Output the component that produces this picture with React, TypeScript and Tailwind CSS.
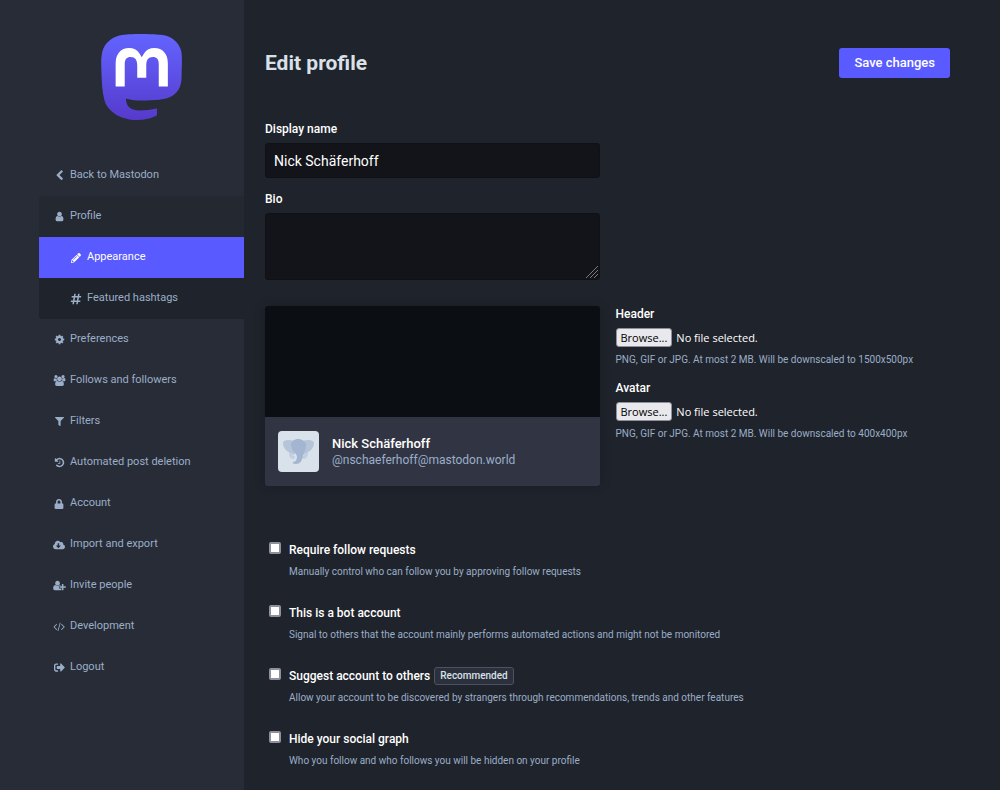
import React from 'react';
import {
    FaCloudDownloadAlt,
    FaFilter,
    FaHashtag,
    FaLock,
    FaPencilAlt,
    FaSignOutAlt
} from 'react-icons/fa';

interface NavItemProps {
    icon: React.ReactNode;
    label: string;
    className?: string;
}

interface FileFieldProps {
    id: string;
    label: string;
    hint: string;
}

interface CheckFieldProps {
    id: string;
    label: string;
    hint: string;
    badge?: string;
}

interface GlyphProps {
    d: string;
    wide?: boolean;
}

const glyphs = {
    back: 'M1427 301l-531 531 531 531q19 19 19 45t-19 45l-166 166q-19 19-45 19t-45-19l-742-742q-19-19-19-45t19-45l742-742q19-19 45-19t45 19l166 166q19 19 19 45t-19 45z',
    user: 'M1536 1399q0 109-62.5 187t-150.5 78h-854q-88 0-150.5-78t-62.5-187q0-85 8.5-160.5t31.5-152 58.5-131 94-89 134.5-34.5q131 128 313 128t313-128q76 0 134.5 34.5t94 89 58.5 131 31.5 152 8.5 160.5zm-256-887q0 159-112.5 271.5t-271.5 112.5-271.5-112.5-112.5-271.5 112.5-271.5 271.5-112.5 271.5 112.5 112.5 271.5z',
    cog: 'M1152 896q0-106-75-181t-181-75-181 75-75 181 75 181 181 75 181-75 75-181zm512-109v222q0 12-8 23t-20 13l-185 28q-19 54-39 91 35 50 107 138 10 12 10 25t-9 23q-27 37-99 108t-94 71q-12 0-26-9l-138-108q-44 23-91 38-16 136-29 186-7 28-36 28h-222q-14 0-24.5-8.5t-11.5-21.5l-28-184q-49-16-90-37l-141 107q-10 9-25 9-14 0-25-11-126-114-165-168-7-10-7-23 0-12 8-23 15-21 51-66.5t54-70.5q-27-50-41-99l-183-27q-13-2-21-12.5t-8-23.5v-222q0-12 8-23t19-13l186-28q14-46 39-92-40-57-107-138-10-12-10-24 0-10 9-23 26-36 98.5-107.5t94.5-71.5q13 0 26 10l138 107q44-23 91-38 16-136 29-186 7-28 36-28h222q14 0 24.5 8.5t11.5 21.5l28 184q49 16 90 37l142-107q9-9 24-9 13 0 25 10 129 119 165 170 7 8 7 22 0 12-8 23-15 21-51 66.5t-54 70.5q26 50 41 98l183 28q13 2 21 12.5t8 23.5z',
    users: 'M657 896q-162 5-265 128h-134q-82 0-138-40.5t-56-118.5q0-353 124-353 6 0 43.5 21t97.5 42.5 119 21.5q67 0 133-23-5 37-5 66 0 159 90 293zm1071 637q0 120-73 189.5t-194 69.5h-874q-121 0-194-69.5t-73-189.5q0-53 3.5-103.5t14-109 26.5-108.5 43-97.5 62-81 85.5-53.5 111.5-20q10 0 43 21.5t73 48 107 48 135 21.5 135-21.5 107-48 73-48 43-21.5q61 0 111.5 20t85.5 53.5 62 81 43 97.5 26.5 108.5 14 109 3.5 103.5zm-1024-1277q0 106-75 181t-181 75-181-75-75-181 75-181 181-75 181 75 75 181zm704 384q0 159-112.5 271.5t-271.5 112.5-271.5-112.5-112.5-271.5 112.5-271.5 271.5-112.5 271.5 112.5 112.5 271.5zm576 225q0 78-56 118.5t-138 40.5h-134q-103-123-265-128 90-134 90-293 0-29-5-66 66 23 133 23 59 0 119-21.5t97.5-42.5 43.5-21q124 0 124 353zm-128-609q0 106-75 181t-181 75-181-75-75-181 75-181 181-75 181 75 75 181z',
    history: 'M1664 896q0 156-61 298t-164 245-245 164-298 61q-172 0-327-72.5t-264-204.5q-7-10-6.5-22.5t8.5-20.5l137-138q10-9 25-9 16 2 23 12 73 95 179 147t225 52q104 0 198.5-40.5t163.5-109.5 109.5-163.5 40.5-198.5-40.5-198.5-109.5-163.5-163.5-109.5-198.5-40.5q-98 0-188 35.5t-160 101.5l137 138q31 30 14 69-17 40-59 40h-448q-26 0-45-19t-19-45v-448q0-42 40-59 39-17 69 14l130 129q107-101 244.5-156.5t284.5-55.5q156 0 298 61t245 164 164 245 61 298zm-640-288v448q0 14-9 23t-23 9h-320q-14 0-23-9t-9-23v-64q0-14 9-23t23-9h224v-352q0-14 9-23t23-9h64q14 0 23 9t9 23z',
    userPlus: 'M704 896c212 0 384-172 384-384s-172-384-384-384-384 172-384 384 172 384 384 384zm960 128h352q13 0 22.5 9.5t9.5 22.5v192q0 13-9.5 22.5t-22.5 9.5h-352v352q0 13-9.5 22.5t-22.5 9.5h-192q-13 0-22.5-9.5t-9.5-22.5v-352h-352q-13 0-22.5-9.5t-9.5-22.5v-192q0-13 9.5-22.5t22.5-9.5h352v-352q0-13 9.5-22.5t22.5-9.5h192q13 0 22.5 9.5t9.5 22.5v352zm-736 224q0 52 38 90t90 38h256v238q-68 50-171 50h-874q-121 0-194-69t-73-190q0-53 3.5-103.5t14-109 26.5-108.5 43-97.5 62-81 85.5-53.5 111.5-20q19 0 39 17 79 61 154.500 91.500t164.500 30.500 164.500-30.500 154.500-91.500q20-17 39-17 132 0 217 96h-223q-52 0-90 38t-38 90v192z',
    code: 'M617 1399l-50 50q-10 10-23 10t-23-10l-466-466q-10-10-10-23t10-23l466-466q10-10 23-10t23 10l50 50q10 10 10 23t-10 23l-393 393 393 393q10 10 10 23t-10 23zm591-1067l-373 1291q-4 13-15.5 19.5t-23.5 2.5l-62-17q-13-4-19.5-15.5t-2.5-24.5l373-1291q4-13 15.5-19.5t23.5-2.5l62 17q13 4 19.5 15.5t2.5 24.5zm657 651l-466 466q-10 10-23 10t-23-10l-50-50q-10-10-10-23t10-23l393-393-393-393q-10-10-10-23t10-23l50-50q10-10 23-10t23 10l466 466q10 10 10 23t-10 23z'
};

const Glyph: React.FC<GlyphProps> = ({ d, wide }) => (
    <svg
        viewBox={wide ? '0 0 2048 1792' : '0 0 1792 1792'}
        className={wide ? 'h-[11px] w-[13px] shrink-0' : 'size-[11px] shrink-0'}
        fill="currentColor"
        aria-hidden="true"
    >
        <path d={d} />
    </svg>
);

const MastodonLogo: React.FC = () => (
    <svg viewBox="0 0 75 79" className="h-[86px] w-[82px]" role="img" aria-label="Mastodon">
        <defs>
            <linearGradient id="logo-fill" x1="0" y1="0" x2="0" y2="1">
                <stop stopColor="#6364ff" />
                <stop offset="1" stopColor="#563acc" />
            </linearGradient>
        </defs>
        <path fill="url(#logo-fill)" d="M73.8393 17.4898C72.6973 9.00165 65.2994 2.31235 56.5296 1.01614C55.05 0.797115 49.4441 0 36.4582 0H36.3612C23.3717 0 20.585 0.797115 19.1054 1.01614C10.5798 2.27644 2.79399 8.28712 0.904997 16.8758C-0.00358524 21.1056 -0.100549 25.7949 0.0682394 30.0965C0.308852 36.2651 0.355538 42.423 0.91577 48.5665C1.30307 52.6474 1.97872 56.6957 2.93763 60.6812C4.73325 68.042 12.0019 74.1676 19.1233 76.6666C26.7478 79.2728 34.9474 79.7055 42.8039 77.9162C43.6682 77.7151 44.5217 77.4817 45.3645 77.216C47.275 76.6092 49.5123 75.9305 51.1571 74.7385L51.2325 74.5948V68.6416L51.0171 68.4729C45.9835 69.675 40.8254 70.2777 35.6502 70.2682C26.7439 70.2682 24.3486 66.042 23.6626 64.2826C23.1113 62.762 22.7612 61.1759 22.6212 59.5646L22.8367 59.3886C27.7864 60.5826 32.8604 61.1853 37.9522 61.1839C39.1768 61.1839 40.3978 61.1839 41.6224 61.1516C46.7435 61.008 52.1411 60.7459 57.1796 59.7621C57.3053 59.7369 57.431 59.7154 57.5387 59.6831C65.4861 58.157 73.0493 53.3672 73.8178 41.2381C73.8465 40.7606 73.9184 36.2364 73.9184 35.7409C73.9219 34.0569 74.4606 23.7949 73.8393 17.4898Z" />
        <path fill="#fff" d="M61.2484 27.0263V48.114H52.8916V27.6475C52.8916 23.3388 51.096 21.1413 47.4437 21.1413C43.4287 21.1413 41.4177 23.7409 41.4177 28.8755V40.0782H33.1111V28.8755C33.1111 23.7409 31.0965 21.1413 27.0815 21.1413C23.4507 21.1413 21.6371 23.3388 21.6335 27.6475V48.114H13.2857V27.0263C13.2857 22.7176 14.384 19.2946 16.5843 16.7572C18.8539 14.2258 21.8311 12.926 25.5264 12.926C29.8036 12.926 33.0357 14.5705 35.1905 17.8559L37.2698 21.346L39.3527 17.8559C41.5074 14.5705 44.7395 12.926 49.0095 12.926C52.7013 12.926 55.6784 14.2258 57.9553 16.7572C60.1531 19.2922 61.2508 22.7152 61.2484 27.0263Z" />
    </svg>
);

const ElephantAvatar: React.FC = () => (
    <svg viewBox="0 0 41 41" className="size-[41px] shrink-0 rounded" role="img" aria-label="Avatar">
        <rect width="41" height="41" fill="#d9e1ea" />
        <path fill="#b6c4da" d="M5 12c0-3 6-4 11-2l1 13c-2 1-5 0-6-2-3-1-6-5-6-9zM36 12c0-3-6-4-11-2l-1 13c2 1 5 0 6-2 3-1 6-5 6-9z" />
        <path fill="#c3cfe0" d="M11 22c0 4 2 6 5 6l1-3c-2 0-3-1-3-3zM30 22c0 4-2 6-5 6l-1-3c2 0 3-1 3-3z" />
        <path fill="#a4b5d1" d="M13 14c0-4 4-6 7-6s8 2 8 6c0 5-2 7-3 11-1 5-3 8-7 8-2 0-4-1-3-2 2 0 4-2 4-5 0-4-6-6-6-12z" />
    </svg>
);

const NavItem: React.FC<NavItemProps> = ({ icon, label, className = 'pl-[13px] text-[#9baec8]' }) => (
    <li>
        <a href="#" className={`flex h-[41px] items-center gap-1 ${className}`}>
            <span className="flex w-[14px] justify-center">{icon}</span>
            {label}
        </a>
    </li>
);

const FileField: React.FC<FileFieldProps> = ({ id, label, hint }) => (
    <div>
        <label htmlFor={id} className="block text-[12px] leading-4 font-medium text-white">{label}</label>
        <div className="mt-1.5 flex items-center gap-1 font-['Open_Sans',sans-serif] text-[11px]">
            <input id={id} type="file" className="sr-only" />
            <label htmlFor={id} className="h-[19px] rounded-[3px] border border-[#8f8f9d] bg-[#e9e9ed] px-1 leading-[17px] text-black">
                Browse...
            </label>
            <span className="leading-[19px] text-white">No file selected.</span>
        </div>
        <p className="mt-[5px] text-[10px] leading-4 text-[#9baec8]">{hint}</p>
    </div>
);

const CheckField: React.FC<CheckFieldProps> = ({ id, label, hint, badge }) => (
    <div className="flex gap-2 pl-1">
        <input
            id={id}
            type="checkbox"
            className="mt-0.5 size-3 shrink-0 appearance-none rounded-[2px] border-2 border-[#8f8f9d] bg-white checked:bg-[#595aff]"
        />
        <div>
            <div className="flex h-5 items-center gap-1">
                <label htmlFor={id} className="text-[12px] font-medium text-white">{label}</label>
                {badge && (
                    <span className="rounded-[3px] border border-[#4d5262] bg-[#2c303c] px-[5px] text-[10px] leading-4 font-medium text-[#d9e1e8]">
                        {badge}
                    </span>
                )}
            </div>
            <p className="mt-1 text-[10px] leading-4 text-[#9baec8]">{hint}</p>
        </div>
    </div>
);

const App: React.FC = () => {
    return (
        <div className="flex min-h-screen bg-[#1f232b] font-[Roboto,sans-serif]">
            <aside className="w-61 shrink-0 bg-[#282c37] pl-[39px]">
                <a href="#" className="flex justify-center pt-[34px]">
                    <MastodonLogo />
                </a>
                <nav className="mt-[35px] text-[11px]">
                    <ul>
                        <NavItem icon={<Glyph d={glyphs.back} />} label="Back to Mastodon" />
                        <NavItem icon={<Glyph d={glyphs.user} />} label="Profile" className="rounded-tl bg-[#242831] pl-[13px] text-[#9baec8]" />
                        <NavItem icon={<FaPencilAlt size={10} />} label="Appearance" className="bg-[#595aff] pl-[30px] text-white" />
                        <NavItem icon={<FaHashtag size={12} />} label="Featured hashtags" className="rounded-bl bg-[#1f232b] pl-[30px] text-[#9baec8]" />
                        <NavItem icon={<Glyph d={glyphs.cog} />} label="Preferences" />
                        <NavItem icon={<Glyph d={glyphs.users} wide />} label="Follows and followers" />
                        <NavItem icon={<FaFilter size={9} />} label="Filters" />
                        <NavItem icon={<Glyph d={glyphs.history} />} label="Automated post deletion" />
                        <NavItem icon={<FaLock size={10} />} label="Account" />
                        <NavItem icon={<FaCloudDownloadAlt size={12} />} label="Import and export" />
                        <NavItem icon={<Glyph d={glyphs.userPlus} wide />} label="Invite people" />
                        <NavItem icon={<Glyph d={glyphs.code} wide />} label="Development" />
                        <NavItem icon={<FaSignOutAlt size={11} />} label="Logout" />
                    </ul>
                </nav>
            </aside>

            <main className="min-w-0 flex-1 pt-12 pr-[50px] pl-[21px]">
                <form>
                    <div className="flex items-center justify-between">
                        <h1 className="text-[21px] leading-[30px] font-bold text-[#d9e1e8]">Edit profile</h1>
                        <button type="button" className="rounded-[3px] bg-[#595aff] px-[15px] text-[13px] leading-[30px] font-medium text-white">
                            Save changes
                        </button>
                    </div>

                    <div className="mt-[43px] grid grid-cols-2 gap-4">
                        <div className="flex flex-col">
                            <label htmlFor="display-name" className="text-[12px] leading-4 font-medium text-white">Display name</label>
                            <input
                                id="display-name"
                                type="text"
                                defaultValue="Nick Schäferhoff"
                                className="mt-1.5 h-[35px] rounded-[3px] border border-[#101116] bg-[#131419] px-2 text-[14px] text-white"
                            />
                            <label htmlFor="bio" className="mt-[13px] text-[12px] leading-4 font-medium text-white">Bio</label>
                            <div className="relative mt-1.5 flex">
                                <textarea
                                    id="bio"
                                    className="h-[67px] w-full resize-none rounded-[3px] border border-[#101116] bg-[#131419] px-2 py-1.5 text-[14px] text-white"
                                />
                                <svg viewBox="0 0 12 12" className="pointer-events-none absolute right-0.5 bottom-0.5 size-3" stroke="#777a80" aria-hidden="true">
                                    <path d="M0 12L12 0M4 12L12 4M8 12L12 8" />
                                </svg>
                            </div>
                        </div>
                    </div>

                    <div className="mt-[26px] grid grid-cols-2 gap-4">
                        <div className="overflow-hidden rounded-[3px] shadow-[0_0_12px_rgba(0,0,0,0.2)]">
                            <div className="h-[111px] bg-[#0b0f13]" />
                            <div className="flex h-[69px] items-center gap-[13px] bg-[#313543] px-[13px]">
                                <ElephantAvatar />
                                <div className="text-[13px] leading-[17px]">
                                    <div className="font-medium text-white">Nick Schäferhoff</div>
                                    <div className="text-[12px] text-[#9baec8]">@nschaeferhoff@mastodon.world</div>
                                </div>
                            </div>
                        </div>
                        <div className="flex flex-col gap-3">
                            <FileField id="header" label="Header" hint="PNG, GIF or JPG. At most 2 MB. Will be downscaled to 1500x500px" />
                            <FileField id="avatar" label="Avatar" hint="PNG, GIF or JPG. At most 2 MB. Will be downscaled to 400x400px" />
                        </div>
                    </div>

                    <div className="mt-[54px] flex flex-col justify-between gap-[23px]">
                        <CheckField
                            id="locked"
                            label="Require follow requests"
                            hint="Manually control who can follow you by approving follow requests"
                        />
                        <CheckField
                            id="bot"
                            label="This is a bot account"
                            hint="Signal to others that the account mainly performs automated actions and might not be monitored"
                        />
                        <CheckField
                            id="discoverable"
                            label="Suggest account to others"
                            hint="Allow your account to be discovered by strangers through recommendations, trends and other features"
                            badge="Recommended"
                        />
                        <CheckField
                            id="hide-network"
                            label="Hide your social graph"
                            hint="Who you follow and who follows you will be hidden on your profile"
                        />
                    </div>
                </form>
            </main>
        </div>
    );
};

export default App;
